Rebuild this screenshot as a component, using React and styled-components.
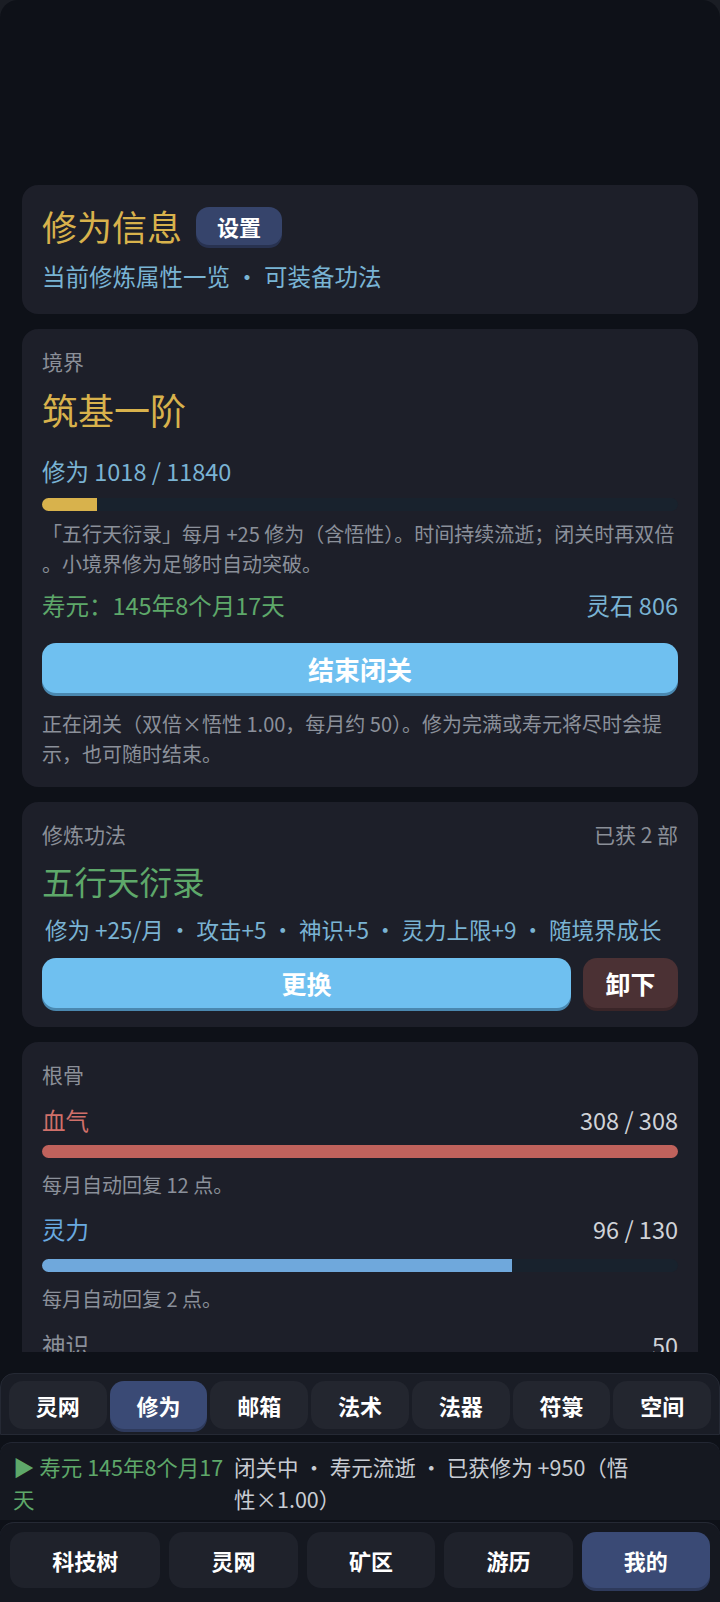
import React from "react";
import { styled, createGlobalStyle } from "styled-components";

const GlobalStyle = createGlobalStyle`
  html, body {
    margin: 0;
    padding: 0;
    background: #1a1d24;
  }
  * {
    box-sizing: border-box;
  }
  body {
    font-family: "Noto Sans CJK SC", "Noto Sans", sans-serif;
  }
`;

const Page = styled.div`
  width: 720px;
  height: 1602px;
  background: #0e1118;
  border-radius: 18px 18px 0 0;
  display: flex;
  flex-direction: column;
  overflow: hidden;
`;

const Scroll = styled.div`
  flex: 1;
  overflow: hidden;
  padding: 185px 22px 0;
  margin-bottom: 21px;
  display: flex;
  flex-direction: column;
  gap: 15px;
`;

const Card = styled.div`
  background: #1d1f29;
  border-radius: 16px;
  padding: ${(p) => p.$pad || "18px 20px 20px"};
  display: flex;
  flex-direction: column;
  flex-shrink: 0;
`;

const TitleRow = styled.div`
  display: flex;
  align-items: center;
  gap: 14px;
`;

const PageTitle = styled.h1`
  margin: 0;
  font-size: 35px;
  font-weight: 400;
  line-height: 1.45;
  color: #d8b24c;
`;

const Pill = styled.button`
  border: none;
  background: #36446b;
  color: #ffffff;
  font-family: inherit;
  font-size: 22px;
  font-weight: 700;
  padding: 3px 21px;
  border-radius: 13px;
  box-shadow: 0 3px 0 #283250;
`;

const Subtitle = styled.div`
  margin-top: 8px;
  font-size: 23.5px;
  line-height: 1.4;
  color: #79b4d4;
`;

const Row = styled.div`
  display: flex;
  justify-content: space-between;
  align-items: baseline;
  margin-top: ${(p) => p.$mt || 0}px;
`;

const Label = styled.div`
  font-size: 21px;
  line-height: 1.4;
  color: #8b8f98;
`;

const Big = styled.div`
  font-size: ${(p) => p.$size || 36}px;
  line-height: 1.35;
  color: ${(p) => p.$color};
  margin-top: ${(p) => p.$mt || 0}px;
`;

const Stat = styled.div`
  font-size: 23.5px;
  line-height: 1.4;
  color: ${(p) => p.$color};
  margin-top: ${(p) => p.$mt || 0}px;
`;

const Track = styled.div`
  height: 13px;
  border-radius: 7px;
  background: #18222d;
  overflow: hidden;
  margin-top: ${(p) => p.$mt || 0}px;
`;

const Fill = styled.div`
  height: 100%;
  background: ${(p) => p.$color};
`;

const Note = styled.p`
  margin: ${(p) => p.$mt || 0}px 0 0;
  font-size: 20px;
  line-height: 30px;
  color: #8b909a;
  line-break: anywhere;
`;

const BigButton = styled.button`
  flex: ${(p) => (p.$grow ? 1 : "none")};
  width: ${(p) => (p.$grow ? "auto" : "95px")};
  height: 50px;
  border: none;
  border-radius: 14px;
  background: ${(p) => (p.$danger ? "#4b3134" : "#6fc0f0")};
  box-shadow: 0 3px 0 ${(p) => (p.$danger ? "#3a2528" : "#4a88b0")};
  color: #ffffff;
  font-family: inherit;
  font-size: ${(p) => p.$size || 25}px;
  font-weight: 700;
`;

const ButtonRow = styled.div`
  display: flex;
  gap: 12px;
  margin-top: ${(p) => p.$mt || 0}px;
`;

const Tags = styled.div`
  margin-top: 11px;
  padding-left: 3px;
  font-size: 22.5px;
  line-height: 1.4;
  color: #7ab3d3;
`;

const Footer = styled.div`
  flex-shrink: 0;
  display: flex;
  flex-direction: column;
`;

const TabBar = styled.div`
  display: flex;
  gap: 3px;
  padding: 7px 8px 5px;
  background: #1a1d26;
  border: 1px solid #252934;
  border-radius: 14px 14px 0 0;
`;

const Tab = styled.button`
  flex: 1;
  height: 48px;
  border: none;
  border-radius: 14px;
  background: ${(p) => (p.$active ? "#3a4a75" : "#23262f")};
  box-shadow: ${(p) => (p.$active ? "0 3px 0 #2e3a5c" : "none")};
  color: #ffffff;
  font-family: inherit;
  font-size: 22px;
  font-weight: 700;
`;

const StatusBar = styled.div`
  margin-top: 7px;
  display: flex;
  gap: 7px;
  padding: 8px 13px 5px;
  background: #151820;
  border-top: 1px solid #232733;
  border-radius: 12px 12px 0 0;
  font-size: 21.5px;
  line-height: 32px;
`;

const StatusLeft = styled.div`
  width: 214px;
  flex-shrink: 0;
  color: #5ea86a;
`;

const StatusRight = styled.div`
  max-width: 400px;
  color: #c8ccd3;
`;

const Nav = styled.div`
  margin-top: 2px;
  display: flex;
  gap: 9px;
  padding: 9px 10px 14px;
  background: #151820;
  border-top: 1px solid #252934;
  border-radius: 14px 14px 0 0;
`;

const NavButton = styled.button`
  flex: 1 1 auto;
  height: 56px;
  border: none;
  border-radius: 14px;
  background: ${(p) => (p.$active ? "#3a4a75" : "#1f222b")};
  box-shadow: ${(p) => (p.$active ? "0 3px 0 #2e3a5c" : "none")};
  color: #ffffff;
  font-family: inherit;
  font-size: 22px;
  font-weight: 700;
  padding: 0 30px;
`;

const tabs = ["灵网", "修为", "邮箱", "法术", "法器", "符箓", "空间"];
const navs = ["科技树", "灵网", "矿区", "游历", "我的"];

export default function App() {
  return (
    <>
      <GlobalStyle />
      <Page>
        <Scroll>
          <Card $pad="16px 20px 21px">
            <TitleRow>
              <PageTitle>修为信息</PageTitle>
              <Pill>设置</Pill>
            </TitleRow>
            <Subtitle>当前修炼属性一览 · 可装备功法</Subtitle>
          </Card>

          <Card $pad="18px 20px 18px">
            <Label>境界</Label>
            <Big $color="#d8b24c" $mt={9}>筑基一阶</Big>
            <Stat $color="#7ab3d3" $mt={21}>
              修为 1018 / 11840
            </Stat>
            <Track $mt={10}>
              <Fill $color="#d8b24c" style={{ width: `${(1018 / 11840) * 100}%` }} />
            </Track>
            <Note $mt={8}>
              「五行天衍录」每月 +25 修为（含悟性）。时间持续流逝；闭关时再双倍。小境界修为足够时自动突破。
            </Note>
            <Row $mt={10}>
              <Stat $color="#5ea86a">寿元：145年8个月17天</Stat>
              <Stat $color="#7ab3d3">灵石 806</Stat>
            </Row>
            <ButtonRow $mt={22}>
              <BigButton $grow $size={26}>结束闭关</BigButton>
            </ButtonRow>
            <Note $mt={16}>
              正在闭关（双倍×悟性 1.00，每月约 50）。修为完满或寿元将尽时会提示，也可随时结束。
            </Note>
          </Card>

          <Card $pad="18px 20px 19px">
            <Row>
              <Label>修炼功法</Label>
              <Label>已获 2 部</Label>
            </Row>
            <Big $color="#5ea86a" $size={32.5} $mt={9}>五行天衍录</Big>
            <Tags>修为 +25/月 · 攻击+5 · 神识+5 · 灵力上限+9 · 随境界成长</Tags>
            <ButtonRow $mt={13}>
              <BigButton $grow>更换</BigButton>
              <BigButton $danger>卸下</BigButton>
            </ButtonRow>
          </Card>

          <Card>
            <Label>根骨</Label>
            <Row $mt={14}>
              <Stat $color="#d0706a">血气</Stat>
              <Stat $color="#d0d3d8">308 / 308</Stat>
            </Row>
            <Track $mt={9}>
              <Fill $color="#c0625c" style={{ width: "100%" }} />
            </Track>
            <Note $mt={12}>每月自动回复 12 点。</Note>
            <Row $mt={13}>
              <Stat $color="#6aaae0">灵力</Stat>
              <Stat $color="#d0d3d8">96 / 130</Stat>
            </Row>
            <Track $mt={13}>
              <Fill $color="#6fa8dc" style={{ width: `${(96 / 130) * 100}%` }} />
            </Track>
            <Note $mt={12}>每月自动回复 2 点。</Note>
            <Row $mt={15}>
              <Stat $color="#8b909a">神识</Stat>
              <Stat $color="#d0d3d8">50</Stat>
            </Row>
          </Card>
        </Scroll>

        <Footer>
          <TabBar>
            {tabs.map((t) => (
              <Tab key={t} $active={t === "修为"}>
                {t}
              </Tab>
            ))}
          </TabBar>
          <StatusBar>
            <StatusLeft>▶ 寿元 145年8个月17天</StatusLeft>
            <StatusRight>闭关中 · 寿元流逝 · 已获修为 +950（悟性×1.00）</StatusRight>
          </StatusBar>
          <Nav>
            {navs.map((n) => (
              <NavButton key={n} $active={n === "我的"}>
                {n}
              </NavButton>
            ))}
          </Nav>
        </Footer>
      </Page>
    </>
  );
}
